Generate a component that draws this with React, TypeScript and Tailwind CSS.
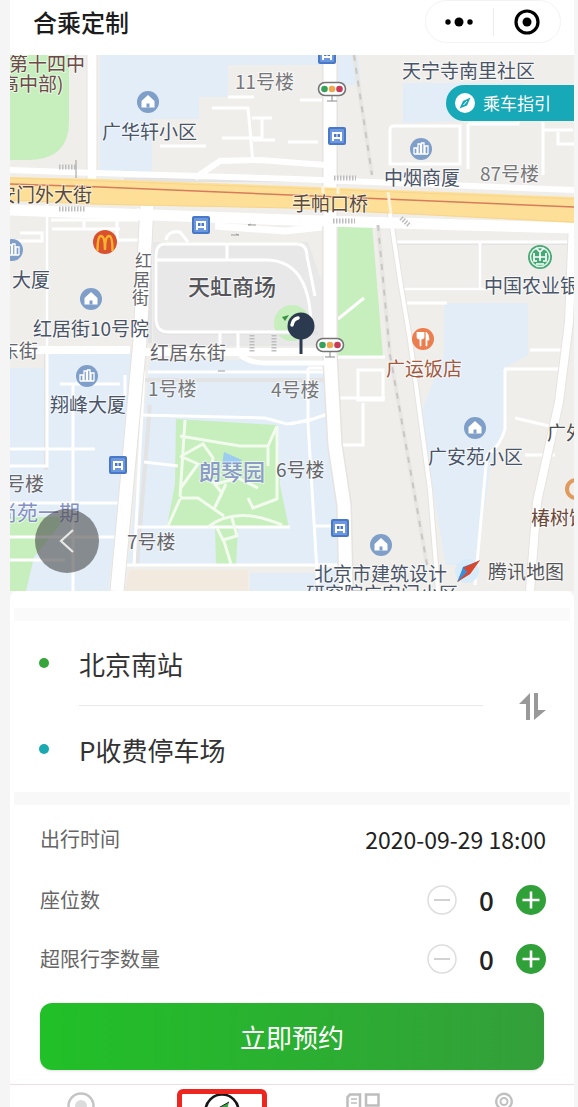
import { useState } from "react";

type Poi = { kind: "home" | "office" | "bus"; x: number; y: number };
type Label = { text: string; x: number; y: number; size?: string; color?: string };

const pois: Poi[] = [
  { kind: "home", x: 148, y: 102 },
  { kind: "home", x: 91, y: 299 },
  { kind: "home", x: 475, y: 428 },
  { kind: "home", x: 381, y: 545 },
  { kind: "office", x: 421, y: 149 },
  { kind: "office", x: 12, y: 250 },
  { kind: "office", x: 87, y: 376 },
  { kind: "bus", x: 327, y: 55 },
  { kind: "bus", x: 337, y: 136 },
  { kind: "bus", x: 201, y: 225 },
  { kind: "bus", x: 118, y: 465 },
  { kind: "bus", x: 340, y: 528 },
];

const labels: Label[] = [
  { text: "第十四中", x: 9, y: 71, color: "fill-[#6d4a48]" },
  { text: "高中部)", x: 0, y: 91, color: "fill-[#6d4a48]" },
  { text: "11号楼", x: 235, y: 89, color: "fill-[#77777a]" },
  { text: "天宁寺南里社区", x: 402, y: 78 },
  { text: "广华轩小区", x: 102, y: 139 },
  { text: "中烟商厦", x: 384, y: 185 },
  { text: "87号楼", x: 480, y: 181, color: "fill-[#77777a]" },
  { text: "安门外大街", x: -3, y: 202, color: "fill-[#5b4a3c]" },
  { text: "手帕口桥", x: 292, y: 211, color: "fill-[#5b4a3c]" },
  { text: "大厦", x: 12, y: 287 },
  { text: "红", x: 135, y: 267, size: "text-[17px]", color: "fill-[#66666a]" },
  { text: "居", x: 133, y: 286, size: "text-[17px]", color: "fill-[#66666a]" },
  { text: "街", x: 132, y: 304, size: "text-[17px]", color: "fill-[#66666a]" },
  { text: "天虹商场", x: 188, y: 295, size: "text-[22px] font-medium", color: "fill-[#55555a]" },
  { text: "中国农业银行", x: 484, y: 293 },
  { text: "红居街10号院", x: 33, y: 336 },
  { text: "东街", x: 0, y: 358, color: "fill-[#66666a]" },
  { text: "红居东街", x: 150, y: 360, color: "fill-[#66666a]" },
  { text: "广运饭店", x: 386, y: 376, color: "fill-[#a0573c]" },
  { text: "1号楼", x: 148, y: 396, color: "fill-[#77777a]" },
  { text: "4号楼", x: 271, y: 397, color: "fill-[#77777a]" },
  { text: "翔峰大厦", x: 50, y: 412 },
  { text: "广外", x: 547, y: 440, color: "fill-[#4c4c50]" },
  { text: "广安苑小区", x: 428, y: 464 },
  { text: "6号楼", x: 276, y: 477, color: "fill-[#66666a]" },
  { text: "朗琴园", x: 199, y: 480, size: "text-[22px] font-medium", color: "fill-[#8a9bc6]" },
  { text: "号楼", x: 6, y: 491, color: "fill-[#66666a]" },
  { text: "尚苑一期", x: -4, y: 520, size: "text-[21px]", color: "fill-[#8290c4]" },
  { text: "椿树馆", x: 531, y: 525, color: "fill-[#6b4636]" },
  { text: "7号楼", x: 127, y: 549, color: "fill-[#66666a]" },
  { text: "北京市建筑设计", x: 314, y: 581 },
  { text: "研究院广安门小区", x: 306, y: 601 },
  { text: "腾讯地图", x: 488, y: 579, color: "fill-[#55555a]" },
];

function PoiIcon({ kind, x, y }: Poi) {
  if (kind === "bus") {
    return (
      <g transform={`translate(${x} ${y})`}>
        <rect x="-9" y="-9" width="18" height="18" rx="2" fill="#4a78c8" />
        <rect x="-7" y="-7" width="14" height="14" rx="1" fill="#6e98dd" />
        <path d="M-5 5V-4h10v9h-2V3h-6v2z" fill="#fff" />
        <path d="M-3-2h2.500v3H-3zM.5-2H3v3H.500z" fill="#4a78c8" />
      </g>
    );
  }
  return (
    <g transform={`translate(${x} ${y})`}>
      <circle r="11" fill="#7f9fc9" />
      {kind === "home" ? (
        <>
          <path d="M0-7 6.500-1V5.500h-13V-1z" fill="#fff" />
          <path d="M-1.500 1.500h3v4h-3z" fill="#7f9fc9" />
        </>
      ) : (
        <path d="M-7 5v-6h3v6m1 0V-5h2.500V5m1 0V-6H3V5m1 0v-8h3v8M-7 5H7" fill="none" stroke="#fff" strokeWidth="1.300" />
      )}
    </g>
  );
}

function TrafficLight({ x, y }: { x: number; y: number }) {
  return (
    <g transform={`translate(${x} ${y})`}>
      <path d="M0 6v6M-5 12H5" stroke="#8a8a8a" />
      <rect x="-13.500" y="-6.500" width="27" height="13" rx="6.500" fill="#fff" stroke="#747474" strokeWidth="1.600" />
      <circle cx="-7.500" r="3.300" fill="#38a05a" />
      <circle r="3.300" fill="#f0a850" />
      <circle cx="7.500" r="3.300" fill="#c83a58" />
    </g>
  );
}

function CityMap() {
  return (
    <svg
      className="block size-full"
      viewBox="10 55 564 536"
      preserveAspectRatio="xMidYMid slice"
      role="img"
      aria-label="地图"
    >
      <rect x="-500" y="55" width="1600" height="536" fill="#efeeeb" />

      {/* blocks */}
      <g fill="#e2edf7">
        <path d="M100 55h222v10H228v32h-29v22h-47v58h-52z" />
        <path d="M338 55h20l3 30h-23zM403 83h120v37h-42l-78 3z" />
        <path d="M10 368h34v-16h90l-4 70-22 169H10z" />
        <path d="M150 360h178l6 90 6 115H128z" />
        <path d="M444 303h84v52l-22 12v58l-16 45-14 95h-30l-26-150 24-60z" />
        <path d="M318 568h20v23h-20zM250 573h66v18h-66z" />
      </g>
      <path d="M130 570h118v21H125z" fill="#f2e9df" />
      <path d="M153 242h155l14 40v64H153z" fill="#e8e8e8" />
      <g fill="#c6efbd">
        <path d="M10 55h59v67q0 38-42 38H10z" />
        <path d="M337 223h35l11 134h-46z" />
        <path d="M176 419l101 6 3 60 9 43h-51l-2 37h-20l-1-37-48-2 8-42z" />
        <path d="M10 517h56l-32 40-8 34H10z" />
        <circle cx="292" cy="323" r="18" />
      </g>
      <path d="M224 452l18 8-6 5h-14z" fill="#9ccdf0" />

      {/* minor streets */}
      <g fill="none" stroke="#e3e3e3" strokeWidth="4">
        <path d="M47 205v145M150 213v130M165 245q-9 0-9 12v62q0 14 12 14h150M144 380h186M150 405l-13 160M46 350v120M124 180h200" />
        <path d="M330 358l6 110 7 123M392 243h182M480 243v45M402 289h92" />
      </g>
      <g fill="none" stroke="#fff" strokeWidth="3">
        <path d="M47 205v261H10M51 220h88V208M84 220v8M117 220v20h24M52 229h68M10 241h32v-8h-22" />
        <path d="M165 244q-9 0-9 12v62q0 14 12 14h144M156 260h110q46 0 45 72M165 244h132q10 0 10 12l8 40M227 244v16M166 240q2-10 14-8l8 10" />
        <path d="M148 372h182M140 415l125 3 22 6 20-3 27-9M144 371l-10 195M144 462l34 4M10 449h85M73 385v206M10 503h108M125 565h205M135 527h155" />
        <path d="M308 368v55M308 368h22M308 423l10 165M314 526h27M290 424l22-5M125 375v20M60 384h60M10 537h105M10 560h55M220 333v20M238 333v20M320 565h25" />
        <path d="M212 108h36l5 55M252 118h20M262 118v20h-40M160 146h46M228 97h26M253 140h22M300 100h22M288 142h30" />
        <path d="M390 130q0-4 4-4h66v38h-70zM468 124v45M468 124h50v-6M543 122v53M543 130h30M558 132v12h16" />
        <path d="M396 242h178M480 242v46M402 289h92M407 303h40M530 350h37M504 369h56M505 369v60q-5 18-18 26l-12 130M515 418l34 8M525 455h30" />
        <path d="M337 357h48M358 370h25v30h-25zM337 398h48M340 445h23v-42M338 319l26-21" />
      </g>
      <g fill="none" stroke="#f2fbee" strokeWidth="3">
        <path d="M185 420l-5 77M180 436l60 10h28l9-20M183 455l20-11 10 14-3 20 12 15-8 16M268 446v20M277 427v73M180 456l18 8-18 25M180 498h18l26 18M168 526l12-27M208 527q28-22 74-2M214 509l12-25M248 498l5 10 24-9M232 518l5 18-14 4-6-12M223 538l8 26M216 484l22-6 20 10" />
      </g>

      {/* main roads */}
      <g fill="none" stroke="#e6e3e0">
        <path d="M92 55v128" strokeWidth="11" />
        <path d="M147 205l-7 135-23 251" strokeWidth="15" />
        <path d="M330 55v300l5 90 9 60 2 86" strokeWidth="16" />
        <path d="M388 200l12 80 10 60 8 60 12 90 8 101" strokeWidth="6" />
        <path d="M573 222l-4 100-10 80-22 100-7 89" strokeWidth="10" />
      </g>
      <g fill="none" stroke="#fff">
        <path d="M10 350h120M140 352h190" strokeWidth="8" />
        <path d="M240 355q10 8 25 8h65" strokeWidth="5" />
        <path d="M10 170l85 3 200 6 279 11M195 178l25-17 40-1 65 5" strokeWidth="6" />
        <path d="M10 210l280 10 284 8" strokeWidth="11" />
        <path d="M215 226l70 5 37-4" strokeWidth="7" />
        <path d="M92 55v128" strokeWidth="9" />
        <path d="M147 205l-7 135-23 251" strokeWidth="13" />
        <path d="M330 55v300l5 90 9 60 2 86" strokeWidth="13" />
        <path d="M388 200l12 80 10 60 8 60 12 90 8 101" strokeWidth="4" />
        <path d="M573 222l-4 100-10 80-22 100-7 89" strokeWidth="8" />
      </g>
      <path d="M10 177l90 2 190 7 284 11v26l-284-15-190-3-90-4z" fill="#fddf98" />
      <path d="M10 178l90 3 190 7 284 11M10 200l90 4 190 4 284 14" fill="none" stroke="#f8d58c" />
      <path d="M10 184l90 3 190 8 284 12" fill="none" stroke="#d67c5c" strokeWidth="1.500" />
      <path d="M323 186v7M338 187v7M388 192l3 22" stroke="#fff3d8" strokeWidth="3" />

      {/* railway */}
      <path d="M354 55l18 120M378 225l12 130 8 45 29 165" fill="none" stroke="#e8e6e3" strokeWidth="4" />
      <path d="M354 55l18 120M378 225l12 130 8 45 29 165" fill="none" stroke="#c8c7c5" strokeWidth="2" strokeDasharray="6 7" />

      {/* footbridges and crossings */}
      <g fill="none" stroke="#bdbdbd" strokeWidth="5" strokeDasharray="1.500 1.500">
        <path d="M59 167h18M59 209h27M334 178h22M333 221h22M252 335v18M274 335v18M401 218l9 8" />
      </g>
      <path d="M76 160v18M248 225h8m-8 0 3-1M231 235h8m0 0-3-1M218 371h7" stroke="#9c9c9c" fill="none" />

      {pois.map((poi) => (
        <PoiIcon key={`${poi.x}-${poi.y}`} {...poi} />
      ))}
      <TrafficLight x={332} y={89} />
      <TrafficLight x={330} y={345} />

      {/* brand markers */}
      <circle cx="105" cy="242" r="12" fill="#d9512f" />
      <path d="M97.500 251c0-9 1-15 3.500-15s4 5 4 14c0-9 1.500-14 4-14s3.500 6 3.500 15" fill="none" stroke="#f8b52c" strokeWidth="2.400" />
      <circle cx="540" cy="257" r="12" fill="#46a874" />
      <circle cx="540" cy="257" r="9.500" fill="none" stroke="#e5f5ec" strokeWidth="1.500" />
      <path d="M540 251v10M536 248l4 4 4-4M535 257h10M534 253v8h3M546 253v8h-3M536 264h8" fill="none" stroke="#fff" strokeWidth="1.700" />
      <circle cx="423" cy="339" r="11" fill="#ec7d4e" />
      <path d="M417 332v5q0 2 2 2h1v7h1v-7h1q2 0 2-2v-5M420.500 332v6M426 346v-14q3 2 3 8h-2v6z" fill="#fff" stroke="#fff" strokeWidth=".8" />
      <circle cx="576" cy="489" r="9" fill="none" stroke="#e09a5e" strokeWidth="4" />

      {/* map provider mark */}
      <circle cx="467" cy="571" r="12" fill="#d7ebf8" />
      <path d="M479 561l-16 6-5 15z" fill="#2f7fd0" />
      <path d="M480 560l-17 8 7 6z" fill="#d8482f" />
      <path d="M457 582l6-14 7 6z" fill="#3a8fdc" />
      <path d="M480 560l-10 14-13 8 12-12z" fill="#d8482f" />

      {labels.map((label) => (
        <text
          key={label.text}
          x={label.x}
          y={label.y}
          className={`${label.size ?? "text-[19px]"} ${label.color ?? "fill-[#4a5468]"}`}
          stroke="#fff"
          strokeWidth="2"
          strokeOpacity=".6"
          paintOrder="stroke"
        >
          {label.text}
        </text>
      ))}

      {/* current position pin */}
      <path d="M282 317l7-2-4 6z" fill="#3d8f45" />
      <path d="M301 335v19" stroke="#2b3a4e" strokeWidth="3" />
      <circle cx="301" cy="326" r="13.500" fill="#2b3a4e" />
      <path d="M292 325q1-6 6-7" fill="none" stroke="#fff" strokeWidth="3.500" strokeLinecap="round" />
    </svg>
  );
}

function Stepper({ id, label }: { id: string; label: string }) {
  const [value, setValue] = useState(0);
  return (
    <div className="flex h-[30px] items-center justify-between">
      <span id={id} className="text-xl text-[#666]">{label}</span>
      <div role="group" aria-labelledby={id} className="flex items-center">
        <button type="button" aria-label={`减少${label}`} onClick={() => setValue(Math.max(0, value - 1))}>
          <svg className="size-[30px]" viewBox="0 0 30 30" fill="none">
            <circle cx="15" cy="15" r="14" stroke="#dedede" strokeWidth="1.500" />
            <path d="M7 15h16" stroke="#d2d2d2" strokeWidth="2" />
          </svg>
        </button>
        <output className="w-[59px] text-center text-[26px] leading-[30px] font-medium text-[#222]">{value}</output>
        <button type="button" aria-label={`增加${label}`} onClick={() => setValue(value + 1)}>
          <svg className="size-[30px]" viewBox="0 0 30 30" fill="none">
            <circle cx="15" cy="15" r="15" fill="#30a038" />
            <path d="M6.500 15h17M15 6.500v17" stroke="#fff" strokeWidth="2.600" />
          </svg>
        </button>
      </div>
    </div>
  );
}

export default function App() {
  const [route, setRoute] = useState(["北京南站", "P收费停车场"]);

  return (
    <div className="flex h-screen flex-col overflow-hidden bg-[#f5f5f6] pr-1 pl-[10px] font-['Noto_Sans_CJK_SC',sans-serif]">
      {/* Header */}
      <header className="flex h-[55px] shrink-0 justify-between bg-white pr-[13px] pl-[23px]">
        <h1 className="text-2xl leading-[44px] font-medium text-[#1c1c1c]">合乘定制</h1>
        <div className="flex h-[43px] w-[136px] items-center rounded-full border border-[#f3f3f3]">
          <button type="button" aria-label="更多" className="flex flex-1 justify-center">
            <svg className="h-[10px] w-7" viewBox="0 0 28 10">
              <circle cx="3" cy="5" r="2.700" />
              <circle cx="14" cy="5" r="4.500" />
              <circle cx="25" cy="5" r="2.700" />
            </svg>
          </button>
          <span className="h-7 w-px bg-[#ececec]" />
          <button type="button" aria-label="关闭" className="flex flex-1 justify-center">
            <svg className="size-[26px]" viewBox="0 0 26 26">
              <circle cx="13" cy="13" r="11" fill="none" stroke="#000" strokeWidth="3.200" />
              <circle cx="13" cy="13" r="4.500" />
            </svg>
          </button>
        </div>
      </header>

      {/* Map */}
      <section className="relative h-[542px] shrink-0 overflow-hidden">
        <div className="h-[536px]">
          <CityMap />
        </div>
        <a href="#guide" className="absolute top-[30px] right-0 flex h-9 w-32 items-center gap-2 rounded-l-full bg-[#17a9b8] pl-[9px] text-[17px] text-white">
          <svg className="size-5" viewBox="0 0 20 20">
            <circle cx="10" cy="10" r="10" fill="#fff" />
            <path d="M15.500 4.500l-3.500 8-7.500 3 3.500-7.500z" fill="#17a9b8" />
            <path d="M8.500 12l3.500-4" stroke="#fff" />
          </svg>
          乘车指引
        </a>
        <button type="button" aria-label="返回" className="absolute top-[454px] left-[25px] flex size-16 items-center justify-center rounded-full bg-[#4a4a4a]/60">
          <svg className="h-6 w-4" viewBox="0 0 16 24" fill="none">
            <path d="M14 1 2 12l12 11" stroke="#e8e8e8" strokeWidth="2.200" />
          </svg>
        </button>
      </section>

      {/* Route */}
      <section className="relative -mt-[6px] shrink-0 rounded-t-lg bg-white">
        <div className="h-[17px]" />
        <div className="mx-1 h-[13px] bg-[#fafafa]" />
        <div className="flex items-center pr-7 pl-[29px]">
          <div className="flex-1">
            <div className="flex h-[84px] items-center">
              <span className="w-10">
                <span className="block size-[10px] rounded-full bg-[#36a53c]" />
              </span>
              <span className="text-[26px] text-[#333]">{route[0]}</span>
            </div>
            <div className="ml-10 h-px bg-[#e8e8e8]" />
            <div className="flex h-[86px] items-center">
              <span className="w-10">
                <span className="block size-[10px] rounded-full bg-[#1aa9b0]" />
              </span>
              <span className="text-[26px] text-[#333]">{route[1]}</span>
            </div>
          </div>
          <button type="button" aria-label="交换起终点" className="ml-9" onClick={() => setRoute([route[1], route[0]])}>
            <svg className="size-[27px]" viewBox="0 0 27 27" fill="#999">
              <path d="M11 0v27H7V11H0zM15 0h4v17h8L15 27z" />
            </svg>
          </button>
        </div>
        <div className="mx-1 h-[13px] bg-[#f8f8f8]" />
      </section>

      {/* Booking form */}
      <section className="shrink-0 bg-white pt-[19px] pr-7 pb-[14px] pl-[30px]">
        <div className="flex h-[30px] items-center justify-between">
          <span className="text-xl text-[#666]">出行时间</span>
          <time dateTime="2020-09-29T18:00" className="text-[23px] text-[#222]">2020-09-29 18:00</time>
        </div>
        <div className="mt-[31px] flex flex-col gap-[29px]">
          <Stepper id="seats" label="座位数" />
          <Stepper id="luggage" label="超限行李数量" />
        </div>
        <div className="mt-[29px] pr-[2px]">
          <button type="button" className="h-[67px] w-full rounded-xl bg-linear-to-r/srgb from-[#21c028] to-[#349f3a] text-[26px] text-white shadow-sm">
            立即预约
          </button>
        </div>
      </section>

      {/* Tab bar */}
      <nav className="grid shrink-0 grid-cols-4 border-t border-[#eee0e0] bg-white">
        <a href="#home" aria-label="首页" className="flex h-14 justify-center pt-[7px]">
          <svg className="h-9 w-7" viewBox="0 0 28 36" fill="none" stroke="#c4c4c4">
            <circle cx="14" cy="14" r="12.500" strokeWidth="2.500" />
            <circle cx="14" cy="14" r="5" fill="#dcdcdc" stroke="#dcdcdc" strokeWidth="2" />
          </svg>
        </a>
        <a href="#carpool" aria-label="合乘" className="flex h-14 justify-center pt-1">
          <span className="flex h-14 w-[90px] justify-center rounded-md border-[5px] border-[#ee2620]">
            <svg className="size-9 shrink-0" viewBox="0 0 36 36" fill="none">
              <circle cx="18" cy="17" r="16.500" stroke="#161616" strokeWidth="2.600" />
              <path d="M25 8 9 17l7 3 4 7z" fill="#35a33d" />
              <path d="M25 8 9 17" stroke="#222" />
            </svg>
          </span>
        </a>
        <a href="#orders" aria-label="订单" className="flex h-14 justify-center pt-2">
          <svg className="h-9 w-[34px]" viewBox="0 0 34 36" fill="none" stroke="#bdbdbd" strokeWidth="2.500">
            <path d="M4 1.500h10v14H1.500V4zM20 1.500h12.500v11H20zM1.500 20h12v13h-12zM20 18h12.500v15H20z" />
            <path d="M5 6h6M5 10h6" strokeWidth="1.500" />
          </svg>
        </a>
        <a href="#mine" aria-label="我的" className="flex h-14 justify-center pt-[7px]">
          <svg className="h-9 w-[18px]" viewBox="0 0 18 36" fill="none" stroke="#c0c0c0">
            <circle cx="9" cy="9.500" r="7.800" strokeWidth="2.400" />
            <circle cx="9" cy="9.500" r="3.500" strokeWidth="2" />
            <path d="M1 30q0-10 8-10t8 10" strokeWidth="2" />
          </svg>
        </a>
      </nav>
    </div>
  );
}
